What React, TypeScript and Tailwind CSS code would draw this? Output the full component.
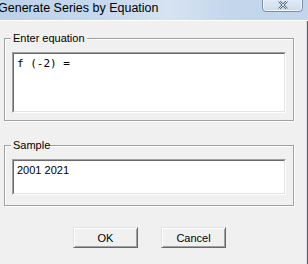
import React from "react";

function GroupBox({ label, labelWidth, height, children }: { label: string; labelWidth: string; height: string; children: React.ReactNode }) {
  return (
    <div
      className={`relative ml-[4px] w-[290px] ${height} border border-[#a0a0a0] shadow-[inset_1px_1px_0_#ffffff,1px_1px_0_#ffffff] pl-[7px] pt-[13px]`}
    >
      <span className={`absolute left-[6px] top-[-9px] ${labelWidth} px-[2px] bg-[#f0f0f0] text-[11px] leading-[16px] text-black`}>
        {label}
      </span>
      {children}
    </div>
  );
}

function Sunken({ height, children, mono }: { height: string; children: React.ReactNode; mono?: boolean }) {
  return (
    <div className={`w-[274px] ${height} border border-t-[#a0a0a0] border-l-[#a0a0a0] border-b-white border-r-white`}>
      <div
        className={`h-full border border-t-[#696969] border-l-[#696969] border-b-[#e3e3e3] border-r-[#e3e3e3] bg-white pl-[2px] pt-[2px] ${
          mono ? "font-['DejaVu_Sans_Mono',monospace] text-[11px] leading-[15px]" : "text-[11px] leading-[15px]"
        } text-black`}
      >
        {children}
      </div>
    </div>
  );
}

function Button({ children }: { children: React.ReactNode }) {
  return (
    <button className="w-[65px] h-[21px] border border-t-[#e3e3e3] border-l-[#e3e3e3] border-b-[#696969] border-r-[#696969] shadow-[inset_1px_1px_0_#ffffff,inset_-1px_-1px_0_#a0a0a0] bg-[#f0f0f0] text-[11px] leading-[16px] text-black flex items-center justify-center">
      {children}
    </button>
  );
}

export default function App() {
  return (
    <div className="w-[308px] h-[264px] overflow-hidden flex flex-col bg-[#f0f0f0] font-['Liberation_Sans',Arial,sans-serif]">
      <div className="relative h-[20px] shrink-0 bg-[linear-gradient(90deg,#bcd1e9_0%,#c7d9ee_35%,#d6e3f1_55%,#c4d6ec_75%,#c2d5eb_100%)] flex items-start">
        <span className="ml-[-2px] mt-[1px] text-[12.5px] leading-[15px] text-black whitespace-nowrap">
          Generate Series by Equation
        </span>
        <div className="absolute left-[262px] top-[-3px] w-[41px] h-[15px] rounded-b-[4px] border border-[#7d8ea6] bg-[linear-gradient(180deg,#e4edf7_0%,#ccdbee_100%)] shadow-[inset_0_0_0_1px_rgba(255,255,255,0.7)] flex items-start justify-center">
          <svg width="10" height="8" viewBox="0 0 10 8" className="mt-[3px]">
            <path d="M1 0 L9 8 M9 0 L1 8" stroke="#4f5f74" strokeWidth="2.2" />
            <path d="M1 0 L9 8 M9 0 L1 8" stroke="#f4f7fb" strokeWidth="0.9" />
          </svg>
        </div>
      </div>
      <div className="flex flex-1 border-t border-white">
        <div className="flex-1 flex flex-col pt-[17px]">
          <GroupBox label="Enter equation" labelWidth="w-[76px]" height="h-[83px]">
            <Sunken height="h-[61px]" mono>
              <div className="pl-[1px]">f (-2) =</div>
            </Sunken>
          </GroupBox>
          <div className="mt-[24px]">
            <GroupBox label="Sample" labelWidth="w-[39px]" height="h-[61px]">
              <Sunken height="h-[36px]">
                <div className="pl-[1px]">2001 2021</div>
              </Sunken>
            </GroupBox>
          </div>
          <div className="mt-[21px] flex pl-[73px] gap-[23px]">
            <Button>OK</Button>
            <Button>Cancel</Button>
          </div>
        </div>
        <div className="w-[1px] bg-[#d8dde3]" />
        <div className="w-[1px] bg-[#5e5e5e]" />
      </div>
    </div>
  );
}
